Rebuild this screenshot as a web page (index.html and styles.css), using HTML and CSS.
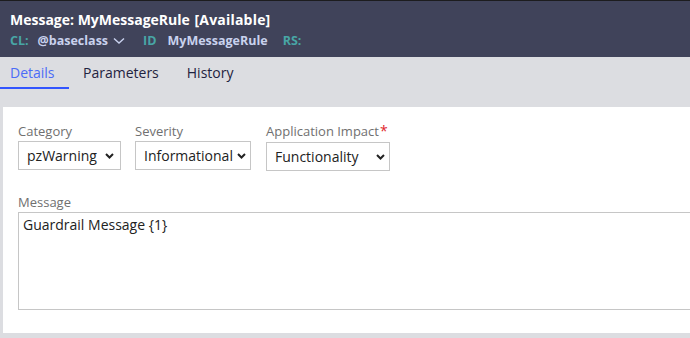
FILE: index.html
```html
<!DOCTYPE html>
<html lang="en">
<head>
  <meta charset="UTF-8" />
  <title>Message: MyMessageRule</title>
  <link rel="stylesheet" href="styles.css">
</head>
<body>
  <header class="rule-header">
    <h1>Message: MyMessageRule <span class="status">[Available]</span></h1>
    <div class="meta">
      <span class="key">CL:</span>
      <span class="val">@baseclass</span>
      <svg class="caret" width="12" height="8" viewBox="0 0 12 8"><path d="M1 1.5l5 4.5 5-4.5" fill="none" stroke="#c9d2ee" stroke-width="1.4"/></svg>
      <span class="key id">ID</span>
      <span class="val">MyMessageRule</span>
      <span class="key rs">RS:</span>
    </div>
  </header>

  <nav class="tabs">
    <div class="tab active">Details</div>
    <div class="tab">Parameters</div>
    <div class="tab">History</div>
  </nav>

  <main class="panel">
    <div class="field-row">
      <div class="field">
        <label>Category</label>
        <div class="select sel-category">
          <span>pzWarning</span>
          <svg width="9" height="6" viewBox="0 0 9 6"><path d="M1 1l3.5 3.5L8 1" fill="none" stroke="#222" stroke-width="2"/></svg>
        </div>
      </div>
      <div class="field">
        <label>Severity</label>
        <div class="select sel-severity">
          <span>Informational</span>
          <svg width="9" height="6" viewBox="0 0 9 6"><path d="M1 1l3.5 3.5L8 1" fill="none" stroke="#222" stroke-width="2"/></svg>
        </div>
      </div>
      <div class="field">
        <label>Application Impact<span class="req">*</span></label>
        <div class="select sel-impact">
          <span>Functionality</span>
          <svg width="9" height="6" viewBox="0 0 9 6"><path d="M1 1l3.5 3.5L8 1" fill="none" stroke="#222" stroke-width="2"/></svg>
        </div>
      </div>
    </div>

    <div class="field message">
      <label>Message</label>
      <div class="textarea">Guardrail Message {1}</div>
    </div>
  </main>
</body>
</html>
```

FILE: styles.css
```css
body {
  margin: 0;
  font-family: "Open Sans", "Noto Sans", sans-serif;
  background-color: #dcdde1;
  height: 338px;
  overflow: hidden;
}
.rule-header {
  background-color: #40435a;
  border-top: 1px solid #1c1c1e;
  height: 57px;
  box-sizing: border-box;
  padding: 8px 10px 0;
}
.rule-header h1 {
  margin: 0;
  font-size: 14px;
  font-weight: 700;
  line-height: 22px;
  color: #ffffff;
}
.rule-header .status {
  letter-spacing: 0.2px;
  margin-left: 1px;
}
.meta {
  display: flex;
  align-items: center;
  font-size: 12.5px;
  font-weight: 700;
  line-height: 18px;
  margin-top: 1px;
}
.meta .key {
  color: #48a6a6;
}
.meta .val {
  color: #c9d2ee;
  margin-left: 9px;
}
.meta .caret {
  margin-left: 5px;
}
.meta .id {
  margin-left: 18px;
}
.meta .id + .val {
  margin-left: 11px;
}
.meta .rs {
  margin-left: 15px;
}
.tabs {
  display: flex;
  height: 32px;
}
.tab {
  padding: 6px 14px 0 10px;
  font-size: 14px;
  line-height: 20px;
  color: #1f2340;
  box-sizing: border-box;
}
.tab + .tab {
  padding-left: 14px;
  padding-right: 14px;
}
.tab.active {
  color: #4b6cf7;
  border-bottom: 2px solid #3355ff;
  width: 69px;
}
.panel {
  display: block;
  margin: 18px 0 0 3px;
  background-color: #ffffff;
  height: 226px;
  padding: 14px 15px 0;
  box-sizing: border-box;
  overflow: hidden;
}
.field-row {
  display: flex;
  gap: 14px;
}
.field label {
  display: block;
  font-size: 13px;
  line-height: 20px;
  color: #707070;
}
.req {
  color: #e0262b;
  font-size: 14px;
  margin-left: 1px;
}
.select {
  display: flex;
  align-items: center;
  justify-content: space-between;
  height: 29px;
  box-sizing: border-box;
  border: 1px solid #c6c6c6;
  padding: 0 6px 0 8px;
  font-size: 14px;
  color: #222222;
}
.sel-category {
  width: 103px;
}
.sel-severity {
  width: 116px;
  padding-right: 4px;
}
.sel-impact {
  width: 124px;
  margin-top: 1px;
  padding-right: 4px;
}
.field-row .field:last-child {
  margin-left: 1px;
}
.message {
  margin-top: 22px;
}
.message label {
  line-height: 19px;
}
.textarea {
  height: 98px;
  box-sizing: border-box;
  border: 1px solid #c6c6c6;
  padding: 2px 4px;
  font-size: 14px;
  line-height: 20px;
  color: #222222;
  width: 700px;
}
```
